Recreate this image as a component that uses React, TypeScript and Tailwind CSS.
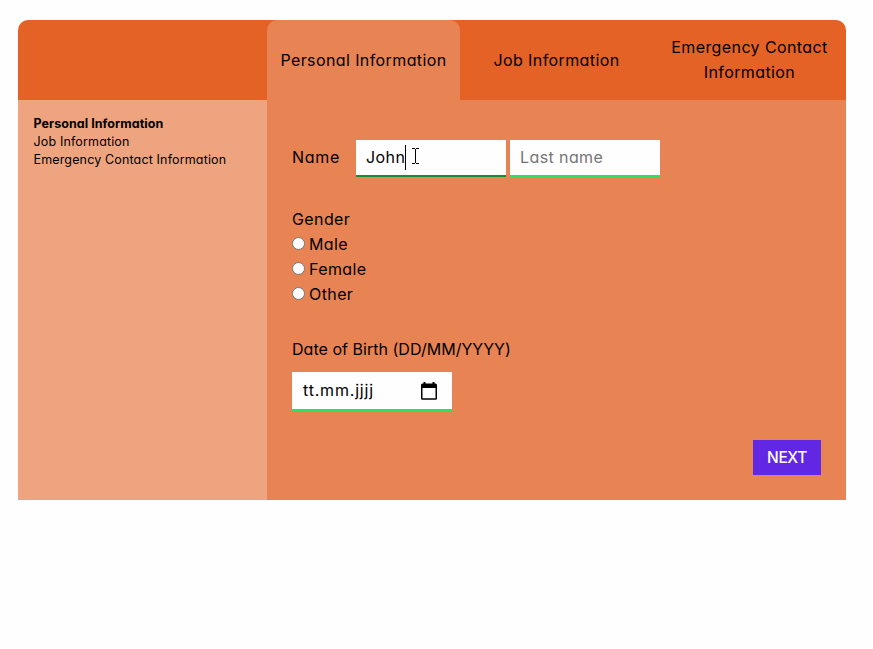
import React from 'react';

const tabs = ['Personal Information', 'Job Information', 'Emergency Contact Information'];
const genders = ['Male', 'Female', 'Other'];

function TextCursor() {
  return (
    <svg className="absolute left-[46px] top-[3px]" width="8" height="17" viewBox="0 0 8 17" fill="none" stroke="#000" shapeRendering="crispEdges">
      <path d="M0 .5h3M4 .5h3M3.5 1v14M0 15.5h3M4 15.5h3" />
    </svg>
  );
}

function CalendarIcon() {
  return (
    <svg width="16" height="18" viewBox="0 0 16 18" fill="none">
      <path fill="#000" fillRule="evenodd" d="M2.500 0h2v1.500h7V0h2v1.500h1A1.500 1.500 0 0 1 16 3v13.200a1.500 1.500 0 0 1-1.500 1.500h-13A1.500 1.500 0 0 1 0 16.200V3a1.500 1.500 0 0 1 1.500-1.500h1zM1.500 6v10.200h13V6z" />
    </svg>
  );
}

export default function App() {
  return (
    <div className="min-h-[649px] bg-[#fefefe] pl-[18px] pt-5 font-['Inter','Noto_Sans',sans-serif] text-base font-normal leading-[25px] tracking-[0.4px] text-black [font-feature-settings:'cv11']">
      <div className="w-[828px]">
        <nav className="flex h-20 rounded-t-[10px] bg-[#e46226] pl-[249px]">
          {tabs.map((tab, i) => (
            <div
              key={tab}
              className={`flex w-[193px] items-center justify-center px-3 text-center ${i === 0 ? 'rounded-t-[10px] bg-[#e88354]' : ''}`}
            >
              {tab}
            </div>
          ))}
        </nav>
        <div className="flex h-[400px]">
          <aside className="w-[249px] bg-[#efa480] pl-[15.5px] pt-[15px] text-[12.5px] leading-[18px] tracking-[0.15px]">
            {tabs.map((tab, i) => (
              <div key={tab} className={i === 0 ? 'font-bold tracking-[0.05px]' : ''}>{tab}</div>
            ))}
          </aside>
          <main className="flex flex-1 flex-col bg-[#e88354] px-[25px] pt-10">
            <div className="flex h-[37px]">
              <span className="w-16 pt-[5px] tracking-[0.7px]">Name</span>
              <div className="flex h-[37px] w-[150px] border-b-2 border-[#188c3c] bg-[#fefefe] pl-[10px] pt-[5px]">
                <div className="relative h-[25px] w-[40px] border-r border-black">
                  John
                  <TextCursor />
                </div>
              </div>
              <div className="ml-1 h-[37px] w-[150px] border-b-2 border-[#2ee062] bg-[#fefefe] pl-[10px] pt-[5px] text-[#757575]">Last name</div>
            </div>
            <div className="mt-[30px]">Gender</div>
            {genders.map((g) => (
              <label key={g} className="flex h-[25px] items-center gap-1">
                <span className="mb-[2px] size-[13px] rounded-full border border-[#767676] bg-white" />
                {g}
              </label>
            ))}
            <div className="mt-[30px] tracking-[0.03px]">Date of Birth (DD/MM/YYYY)</div>
            <div className="mt-[10px] flex h-[39px] w-40 items-center justify-between border-b-2 border-[#2ee062] bg-[#fefefe] pl-[11px] pr-[15px]">
              <span className="tracking-[0.8px]">tt.mm.jjjj</span>
              <CalendarIcon />
            </div>
            <button className="mt-[29px] h-[35px] w-[68px] self-end bg-[#6227e4] text-[15.5px] font-[450] tracking-[-0.4px] text-white">NEXT</button>
          </main>
        </div>
      </div>
    </div>
  );
}
